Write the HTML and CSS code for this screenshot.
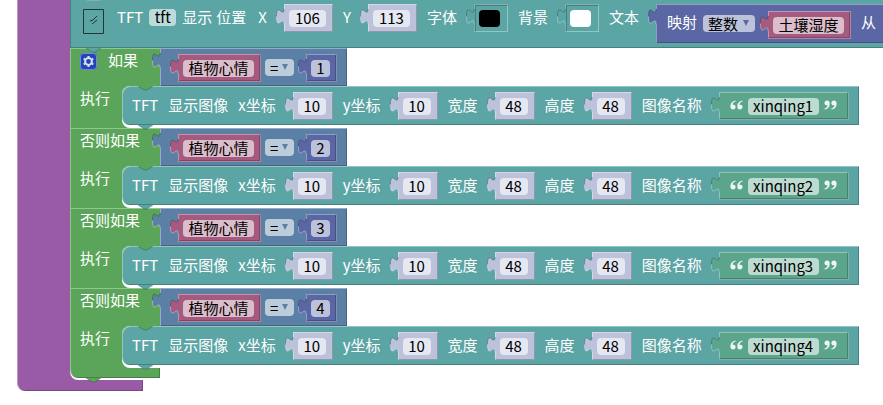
FILE: index.html
```
<!DOCTYPE html>
<html lang="zh-CN">
<head>
<meta charset="utf-8">
<title>Blocks</title>
<link rel="stylesheet" href="styles.css">
</head>
<body>
<svg class="defs" aria-hidden="true">
  <symbol id="tab" viewBox="0 0 9 17">
    <path class="tab-fill" d="M9 1H8C8 11 0.5 -7 0.5 8.5S8 6 8 16H9Z"/>
    <path class="tab-dark" d="M8 1C8 11 0.5 -7 0.5 8.5"/>
    <path class="tab-light" d="M0.5 8.5C0.5 24 8 6 8 16"/>
  </symbol>
  <symbol id="notch" viewBox="0 0 17 5">
    <path d="M1 0L7 4H10L16 0Z"/>
    <path class="notch-edge" d="M1 0L7 4H10L16 0"/>
  </symbol>
  <symbol id="open-quote" viewBox="0 0 13 10">
    <path d="M5.6 0.4C2.3 0.9 0.4 3 0.4 6.2C0.4 8.3 1.4 9.4 3 9.4C4.6 9.4 5.6 8.4 5.6 7C5.6 5.6 4.7 4.7 3.4 4.7C3 4.7 2.7 4.8 2.5 4.9C2.7 3.2 3.7 2 5.6 1.5ZM12.5 0.4C9.2 0.9 7.3 3 7.3 6.2C7.3 8.3 8.3 9.4 9.9 9.4C11.5 9.4 12.5 8.4 12.5 7C12.5 5.6 11.6 4.7 10.3 4.7C9.9 4.7 9.6 4.8 9.4 4.9C9.6 3.2 10.6 2 12.5 1.5Z"/>
  </symbol>
</svg>
<main class="workspace">
  <div class="procedure">
    <div class="procedure-body">
      <div class="display">
        <svg class="notch above"><use href="#notch"/></svg>
        <svg class="screen" viewBox="0 0 21 25" aria-hidden="true"><path d="M0.5 0.5H20.5V24.5H0.5Z M7 12L10 11L14 7 M9 15L14 11"/></svg>
        <label class="arg named">TFT <span class="field w-name"><input value="tft"></span></label>
        <span>显示</span><span class="place">位置</span>
        <label class="arg coord">X <span class="value number"><svg class="tab"><use href="#tab"/></svg><span class="field w3"><input value="106"></span></span></label>
        <label class="arg">Y <span class="value number"><svg class="tab"><use href="#tab"/></svg><span class="field w3"><input value="113"></span></span></label>
        <div class="arg">字体 <span class="value color"><svg class="tab"><use href="#tab"/></svg><button class="swatch black" aria-label="字体"></button></span></div>
        <div class="arg">背景 <span class="value color"><svg class="tab"><use href="#tab"/></svg><button class="swatch white" aria-label="背景"></button></span></div>
        <div class="arg">文本
          <div class="value map"><svg class="tab"><use href="#tab"/></svg>
            <label for="map-type">映射</label>
            <span class="drop"><select id="map-type" class="field w-type"><option>整数</option></select></span>
            <span class="value variable"><svg class="tab"><use href="#tab"/></svg><span class="field w-var"><input aria-label="变量" value="土壤湿度"></span></span>
            <span class="from">从</span>
          </div>
        </div>
      </div>

      <div class="if-block">
        <svg class="notch joint"><use href="#notch"/></svg>
        <section class="clause">
          <div class="condition">
            <div class="clause-label">
              <button class="gear" aria-label="设置"><svg viewBox="0 0 17 17"><path d="M8.5 4.3V2.9M8.5 12.7V14.1M4.9 6.4L3.7 5.7M12.1 10.6L13.3 11.3M4.9 10.6L3.7 11.3M12.1 6.4L13.3 5.7"/><circle cx="8.5" cy="8.5" r="3.4"/></svg></button>如果
            </div>
            <div class="value compare"><svg class="tab"><use href="#tab"/></svg>
              <span class="value variable"><svg class="tab"><use href="#tab"/></svg><span class="field w-var"><input aria-label="变量" value="植物心情"></span></span>
              <span class="drop"><select class="field w-op" aria-label="比较"><option>=</option></select></span>
              <span class="value math"><svg class="tab"><use href="#tab"/></svg><span class="field w1"><input aria-label="数值" value="1"></span></span>
            </div>
          </div>
          <div class="do">
            <span class="do-label">执行</span>
            <div class="slot"><div class="statement">
              <svg class="notch top"><use href="#notch"/></svg><svg class="notch bottom"><use href="#notch"/></svg>
              <span>TFT</span><span>显示图像</span>
              <label class="arg">x坐标 <span class="value number"><svg class="tab"><use href="#tab"/></svg><span class="field w2"><input value="10"></span></span></label>
              <label class="arg">y坐标 <span class="value number"><svg class="tab"><use href="#tab"/></svg><span class="field w2"><input value="10"></span></span></label>
              <label class="arg">宽度 <span class="value number"><svg class="tab"><use href="#tab"/></svg><span class="field w2"><input value="48"></span></span></label>
              <label class="arg">高度 <span class="value number"><svg class="tab"><use href="#tab"/></svg><span class="field w2"><input value="48"></span></span></label>
              <label class="arg">图像名称 <span class="value string"><svg class="tab"><use href="#tab"/></svg><svg class="quote"><use href="#open-quote"/></svg><span class="field w-text"><input value="xinqing1"></span><svg class="quote close"><use href="#open-quote"/></svg></span></label>
            </div></div>
          </div>
        </section>
        <section class="clause">
          <div class="condition">
            <div class="clause-label">否则如果</div>
            <div class="value compare"><svg class="tab"><use href="#tab"/></svg>
              <span class="value variable"><svg class="tab"><use href="#tab"/></svg><span class="field w-var"><input aria-label="变量" value="植物心情"></span></span>
              <span class="drop"><select class="field w-op" aria-label="比较"><option>=</option></select></span>
              <span class="value math"><svg class="tab"><use href="#tab"/></svg><span class="field w1"><input aria-label="数值" value="2"></span></span>
            </div>
          </div>
          <div class="do">
            <span class="do-label">执行</span>
            <div class="slot"><div class="statement">
              <svg class="notch top"><use href="#notch"/></svg><svg class="notch bottom"><use href="#notch"/></svg>
              <span>TFT</span><span>显示图像</span>
              <label class="arg">x坐标 <span class="value number"><svg class="tab"><use href="#tab"/></svg><span class="field w2"><input value="10"></span></span></label>
              <label class="arg">y坐标 <span class="value number"><svg class="tab"><use href="#tab"/></svg><span class="field w2"><input value="10"></span></span></label>
              <label class="arg">宽度 <span class="value number"><svg class="tab"><use href="#tab"/></svg><span class="field w2"><input value="48"></span></span></label>
              <label class="arg">高度 <span class="value number"><svg class="tab"><use href="#tab"/></svg><span class="field w2"><input value="48"></span></span></label>
              <label class="arg">图像名称 <span class="value string"><svg class="tab"><use href="#tab"/></svg><svg class="quote"><use href="#open-quote"/></svg><span class="field w-text"><input value="xinqing2"></span><svg class="quote close"><use href="#open-quote"/></svg></span></label>
            </div></div>
          </div>
        </section>
        <section class="clause">
          <div class="condition">
            <div class="clause-label">否则如果</div>
            <div class="value compare"><svg class="tab"><use href="#tab"/></svg>
              <span class="value variable"><svg class="tab"><use href="#tab"/></svg><span class="field w-var"><input aria-label="变量" value="植物心情"></span></span>
              <span class="drop"><select class="field w-op" aria-label="比较"><option>=</option></select></span>
              <span class="value math"><svg class="tab"><use href="#tab"/></svg><span class="field w1"><input aria-label="数值" value="3"></span></span>
            </div>
          </div>
          <div class="do">
            <span class="do-label">执行</span>
            <div class="slot"><div class="statement">
              <svg class="notch top"><use href="#notch"/></svg><svg class="notch bottom"><use href="#notch"/></svg>
              <span>TFT</span><span>显示图像</span>
              <label class="arg">x坐标 <span class="value number"><svg class="tab"><use href="#tab"/></svg><span class="field w2"><input value="10"></span></span></label>
              <label class="arg">y坐标 <span class="value number"><svg class="tab"><use href="#tab"/></svg><span class="field w2"><input value="10"></span></span></label>
              <label class="arg">宽度 <span class="value number"><svg class="tab"><use href="#tab"/></svg><span class="field w2"><input value="48"></span></span></label>
              <label class="arg">高度 <span class="value number"><svg class="tab"><use href="#tab"/></svg><span class="field w2"><input value="48"></span></span></label>
              <label class="arg">图像名称 <span class="value string"><svg class="tab"><use href="#tab"/></svg><svg class="quote"><use href="#open-quote"/></svg><span class="field w-text"><input value="xinqing3"></span><svg class="quote close"><use href="#open-quote"/></svg></span></label>
            </div></div>
          </div>
        </section>
        <section class="clause">
          <div class="condition">
            <div class="clause-label">否则如果</div>
            <div class="value compare"><svg class="tab"><use href="#tab"/></svg>
              <span class="value variable"><svg class="tab"><use href="#tab"/></svg><span class="field w-var"><input aria-label="变量" value="植物心情"></span></span>
              <span class="drop"><select class="field w-op" aria-label="比较"><option>=</option></select></span>
              <span class="value math"><svg class="tab"><use href="#tab"/></svg><span class="field w1"><input aria-label="数值" value="4"></span></span>
            </div>
          </div>
          <div class="do">
            <span class="do-label">执行</span>
            <div class="slot"><div class="statement">
              <svg class="notch top"><use href="#notch"/></svg><svg class="notch bottom"><use href="#notch"/></svg>
              <span>TFT</span><span>显示图像</span>
              <label class="arg">x坐标 <span class="value number"><svg class="tab"><use href="#tab"/></svg><span class="field w2"><input value="10"></span></span></label>
              <label class="arg">y坐标 <span class="value number"><svg class="tab"><use href="#tab"/></svg><span class="field w2"><input value="10"></span></span></label>
              <label class="arg">宽度 <span class="value number"><svg class="tab"><use href="#tab"/></svg><span class="field w2"><input value="48"></span></span></label>
              <label class="arg">高度 <span class="value number"><svg class="tab"><use href="#tab"/></svg><span class="field w2"><input value="48"></span></span></label>
              <label class="arg">图像名称 <span class="value string"><svg class="tab"><use href="#tab"/></svg><svg class="quote"><use href="#open-quote"/></svg><span class="field w-text"><input value="xinqing4"></span><svg class="quote close"><use href="#open-quote"/></svg></span></label>
            </div></div>
          </div>
        </section>
        <div class="if-foot"><svg class="notch bottom"><use href="#notch"/></svg></div>
      </div>
    </div>
    <div class="procedure-foot"></div>
  </div>
</main>
</body>
</html>
```
FILE: styles.css
```
:root {
  --purple: #995ba5;
  --teal: #5ba5a5;
  --green: #5ba55b;
  --light: rgba(255, 255, 255, 0.35);
  --dark: rgba(0, 0, 0, 0.22);
}

* { box-sizing: border-box; }

body {
  margin: 0;
  background: #fff;
  color: #fff;
  font: 15px/26px "Noto Sans CJK SC", sans-serif;
  white-space: nowrap;
}

.defs { position: absolute; width: 0; height: 0; }
.workspace { overflow: hidden; padding-left: 17px; }

/* Outer procedure */
.procedure-body {
  padding-left: 53px;
  background: linear-gradient(var(--purple), var(--purple)) 0 0 / 62px 100% no-repeat;
  box-shadow: inset 1px 0 var(--light);
}
.procedure-foot {
  width: 126px;
  height: 11px;
  background: var(--purple);
  border-radius: 0 0 0 8px;
  box-shadow: inset 1px 0 var(--light), inset -1px -1px var(--dark);
}

/* Connectors */
.tab {
  position: absolute;
  left: -8px;
  top: 4px;
  width: 9px;
  height: 17px;
  fill: none;
}
.tab-fill { fill: var(--block); }
.tab-dark { stroke: var(--dark); }
.tab-light { stroke: var(--light); }
.notch {
  position: absolute;
  left: 15px;
  top: 0;
  width: 17px;
  height: 5px;
  fill: var(--teal);
}
.notch-edge { fill: none; stroke: var(--dark); }
.above .notch-edge, .above { stroke: var(--light); }
.notch.top { fill: var(--green); }
.notch.bottom { top: 100%; }

/* Display statement */
.display {
  --block: var(--teal);
  position: relative;
  display: flex;
  align-items: flex-start;
  gap: 10px;
  height: 48px;
  padding: 4px 0 0 13px;
  background: var(--teal);
  box-shadow: inset 1px -1px var(--dark);
}
.display > * { flex: none; }
.screen {
  width: 21px;
  height: 25px;
  margin: 5px 3px 0 0;
  fill: none;
  stroke: #263434;
}
.arg { display: flex; align-items: flex-start; gap: 17px; }
.arg.named { gap: 6px; margin-right: -4px; }
.named .field { margin-top: 5px; }
.place { margin-left: -6px; }
.coord { margin-left: 2px; }

/* Value blocks */
.value {
  position: relative;
  display: flex;
  align-items: flex-start;
  height: 28px;
  padding: 6px 7px 0 5px;
  background: var(--block);
  box-shadow: inset 1px 1px var(--light), inset -1px -1px var(--dark);
}
.number { --block: #bdc2db; }
.color {
  --block: var(--teal);
  padding-right: 8px;
  box-shadow: inset 0 0 0 1px var(--light), inset 2px 2px var(--dark);
}
.variable { --block: #a55b80; }
.math { --block: #5b67a5; }
.string { --block: #5ba58c; gap: 5px; padding: 6px 12px 0 11px; }
.math, .variable, .string { box-shadow: inset 0 0 0 1px var(--light), inset -2px -2px var(--dark); }
.compare {
  --block: #5b80a5;
  height: 38px;
  padding: 6px 10px 0 18px;
}
.map {
  --block: #5b67a5;
  height: 39px;
  padding: 7px 10px 0 11px;
}
.map .drop { margin: 4px 13px 0 6px; }
.map .from { margin-left: 10px; }
.map > label, .map .from { line-height: 22px; }

/* Fields */
.field {
  display: block;
  height: 17px;
  margin: 0;
  padding: 0;
  border: 0;
  border-radius: 4px;
  background: rgba(255, 255, 255, 0.6);
  color: #000;
  font: inherit;
  line-height: 17px;
  text-align: center;
  appearance: none;
}
.field input {
  display: block;
  width: 100%;
  height: 25px;
  margin: -5px 0 0;
  padding: 0;
  border: 0;
  background: none;
  color: inherit;
  font: inherit;
  line-height: 25px;
  text-align: center;
}
.w1 { width: 19px; }
.w2 { width: 28px; }
.w3 { width: 37px; }
.w-name { width: 27px; }
.w-var { width: 71px; }
.w-text { width: 71px; }
.w-op { width: 29px; padding-left: 5px; text-align: left; }
.w-type { width: 52px; padding-left: 5px; text-align: left; }

.drop { position: relative; }
.drop::after {
  content: "";
  position: absolute;
  right: 6px;
  top: 5px;
  border: solid transparent;
  border-width: 6px 3px 0;
  border-top-color: var(--block);
  pointer-events: none;
}
.compare .drop { margin: 5px 12px 0 4px; }

.swatch {
  width: 21px;
  height: 17px;
  padding: 0;
  border: 0;
  border-radius: 4px;
}
.black { background: #000; }
.white { background: #fff; }

.quote { width: 13px; height: 10px; margin-top: 2px; fill: #fff; opacity: 0.9; }
.close { transform: rotate(180deg); }

/* Conditional block */
.if-block {
  position: relative;
  padding-bottom: 2px;
  background: #fff;
  border-radius: 0 0 0 8px;
}
.joint { z-index: 1; }
.condition { display: flex; height: 38px; }
.clause-label {
  display: flex;
  flex: none;
  gap: 11px;
  width: 90px;
  padding-left: 10px;
  background: var(--green);
  box-shadow: inset 1px 1px var(--light);
  line-height: 23px;
}
.do {
  display: flex;
  background: linear-gradient(var(--green), var(--green)) 0 0 / 62px 100% no-repeat;
  box-shadow: inset 1px 0 var(--light);
}
.do-label { flex: none; width: 52px; padding-left: 10px; line-height: 23px; }
.slot {
  padding-bottom: 3px;
  background: #fff;
  border-radius: 8px 0 0 8px;
}
.statement {
  position: relative;
  display: flex;
  align-items: flex-start;
  gap: 10px;
  height: 39px;
  padding: 6px 10px 0;
  background: var(--teal);
  border-radius: 8px 0 0 8px;
  box-shadow: inset 1px 1px var(--light), inset -1px -1px var(--dark);
}
.statement .notch { z-index: 1; }
.gear {
  width: 17px;
  height: 17px;
  margin-top: 5px;
  padding: 0;
  border: 0;
  border-radius: 4px;
  background: #2344bd;
  box-shadow: inset 0 0 0 1px #7389d6;
}
.gear svg { display: block; width: 17px; height: 17px; fill: none; stroke: #dbe6e8; stroke-width: 2; }
.if-foot {
  position: relative;
  width: 90px;
  height: 10px;
  background: var(--green);
  border-radius: 0 0 0 8px;
  box-shadow: inset 1px 0 var(--light), inset -1px -1px var(--dark);
}
.if-foot .notch { fill: var(--green); }
```
